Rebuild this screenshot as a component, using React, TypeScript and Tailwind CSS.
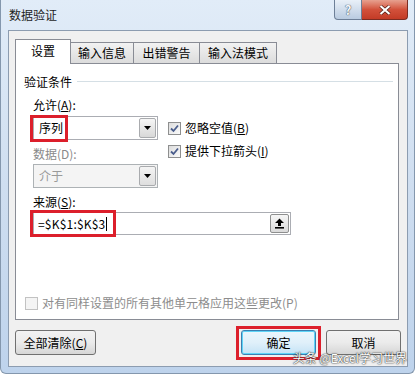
import React from "react";

const CheckBox = ({ checked, disabled }: { checked?: boolean; disabled?: boolean }) => (
  <span
    className={`w-[13px] h-[13px] border flex items-center justify-center shrink-0 ${
      disabled ? "border-[#c2c2c2] bg-[#f4f4f4]" : "border-[#8e8f8f] bg-gradient-to-br from-[#dcdcdc] to-[#fbfbfb]"
    }`}
  >
    {checked && (
      <svg width="9" height="9" viewBox="0 0 9 9">
        <path d="M1 4.5 L3.5 7 L8 1.5" fill="none" stroke="#4a5d8c" strokeWidth="1.8" />
      </svg>
    )}
  </span>
);

const DropArrow = ({ disabled }: { disabled?: boolean }) => (
  <span
    className={`w-[17px] h-full border border-[#a9abae] rounded-[2px] flex items-center justify-center bg-gradient-to-b ${
      disabled ? "from-[#f4f4f4] to-[#dedede]" : "from-[#f6f6f6] to-[#d8d8d8]"
    }`}
  >
    <svg width="7" height="4" viewBox="0 0 7 4">
      <path d="M0 0 H7 L3.5 4 Z" fill="#000" />
    </svg>
  </span>
);

const Tab = ({ label, active, w }: { label: string; active?: boolean; w: string }) => (
  <div
    className={`${w} flex items-center justify-center border border-[#898c95] ${
      active
        ? "h-[25px] bg-white border-b-0 -mb-px relative z-10 pb-[2px]"
        : "h-[21px] -ml-px bg-gradient-to-b from-[#f2f2f2] to-[#dcdcdc] border-b-0"
    }`}
  >
    {label}
  </div>
);

export default function App() {
  return (
    <div className="w-[415px] h-[374px] flex flex-col relative overflow-hidden bg-gradient-to-b from-[#e1ecf8] via-[#cfdef0] to-[#bed3ec] border-x border-b border-[#8497ad] rounded-b-[6px] pl-[7px] pr-[6px] pb-[6px] text-[12px] leading-4 text-black font-['Microsoft_YaHei','Noto_Sans_CJK_SC',sans-serif]">
      {/* Title bar */}
      <div className="h-[30px] flex justify-between shrink-0">
        <div className="pt-[7px] pl-px text-[12px] text-[#1e1e1e]">数据验证</div>
        <div className="flex h-[20px]">
          <div className="w-[28px] h-full border border-[#6d7f97] border-t-0 rounded-bl-[4px] bg-gradient-to-b from-[#e9f0f8] to-[#b9cbe0] flex items-center justify-center text-[13px] font-bold text-[#f4f6f9] [text-shadow:0_0_1px_#3b4a5c,0_0_1px_#3b4a5c]">
            ?
          </div>
          <div className="w-[46px] h-full border border-[#7b2c22] border-t-0 border-l-0 rounded-br-[4px] bg-gradient-to-b from-[#e6a08f] via-[#d2513b] to-[#c33b26] flex items-center justify-center">
            <svg width="12" height="10" viewBox="0 0 12 10">
              <path d="M1.5 1 L10.5 9 M10.5 1 L1.5 9" stroke="#4a1a12" strokeWidth="3.4" />
              <path d="M1.5 1 L10.5 9 M10.5 1 L1.5 9" stroke="#fff" strokeWidth="2.2" />
            </svg>
          </div>
        </div>
      </div>

      {/* Client area */}
      <div className="flex-1 bg-[#f0f0f0] border border-[#8c9cb0] pl-[6px] pt-[8px] flex flex-col">
        <div className="flex items-end h-[24px]">
          <Tab label="设置" active w="w-[56px]" />
          <Tab label="输入信息" w="w-[64px]" />
          <Tab label="出错警告" w="w-[67px]" />
          <Tab label="输入法模式" w="w-[78px]" />
        </div>

        {/* Panel */}
        <div className="w-[384px] h-[257px] bg-white border border-[#898c95] flex flex-col">
          <div className="flex items-center gap-[5px] pl-[8px] pr-[5px] mt-[10px]">
            <span>验证条件</span>
            <span className="flex-1 h-px bg-[#d5dfe5] mt-[-1px]" />
          </div>

          <div className="pl-[17px] mt-[7px]">
            允许(<span className="underline">A</span>):
          </div>

          <div className="flex pl-[17px] mt-[3px] gap-[10px]">
            <div className="flex flex-col w-[125px]">
              <div className="relative h-[24px] border border-[#abadb3] bg-white flex items-center justify-between pl-[5px] pr-px py-px">
                <span className="leading-4">序列</span>
                <DropArrow />
                <span className="absolute -left-[4px] -top-[2px] w-[38px] h-[27px] border-[3px] border-[#dc1f2b]" />
              </div>
              <div className="mt-[6px] text-[#8a8a8a]">数据(D):</div>
              <div className="mt-[2px] h-[24px] border border-[#adb2b5] bg-[#f4f4f4] flex items-center justify-between pl-[5px] pr-px py-px text-[#9a9a9a]">
                <span>介于</span>
                <DropArrow disabled />
              </div>
            </div>
            <div className="flex flex-col pt-[4px] gap-[7px]">
              <div className="flex items-center gap-[4px]">
                <CheckBox checked />
                <span>
                  忽略空值(<span className="underline">B</span>)
                </span>
              </div>
              <div className="flex items-center gap-[4px]">
                <CheckBox checked />
                <span>
                  提供下拉箭头(<span className="underline">I</span>)
                </span>
              </div>
            </div>
          </div>

          <div className="pl-[17px] mt-[6px]">
            来源(<span className="underline">S</span>):
          </div>
          <div className="ml-[17px] mt-[2px] w-[258px] h-[23px] relative border border-[#abadb3] bg-white flex items-center justify-between pl-[4px] pr-px">
            <span className="flex items-center tracking-[0.2px]">
              =$K$1:$K$3<span className="w-px h-[14px] bg-black ml-px" />
            </span>
            <span className="w-[19px] h-[19px] border border-[#8e8f8f] rounded-[2px] bg-gradient-to-b from-[#f6f6f6] to-[#dadada] flex items-center justify-center">
              <svg width="11" height="11" viewBox="0 0 11 11">
                <path d="M5.5 0.5 L10 5 H7 V8 H4 V5 H1 Z" fill="#000" />
                <rect x="1" y="9" width="9" height="1.6" fill="#000" />
              </svg>
            </span>
            <span className="absolute -left-[4px] -top-[3px] w-[86px] h-[27px] border-[3px] border-[#dc1f2b]" />
          </div>

          <div className="mt-auto mb-[8px] pl-[9px] flex items-center gap-[4px] text-[#8d8d8d]">
            <CheckBox disabled />
            <span>对有同样设置的所有其他单元格应用这些更改(P)</span>
          </div>
        </div>

        {/* Buttons */}
        <div className="w-[386px] mt-[10px] flex justify-between">
          <button className="w-[81px] h-[25px] border border-[#707070] rounded-[3px] bg-gradient-to-b from-[#f2f2f2] via-[#ebebeb] to-[#d6d6d6] text-[12px]">
            全部清除(<span className="underline">C</span>)
          </button>
          <div className="flex gap-[10px]">
            <div className="relative">
              <button className="w-[75px] h-[25px] border border-[#3c7fb1] rounded-[3px] bg-gradient-to-b from-[#eaf6fd] via-[#e0f0fa] to-[#c4e3f6] shadow-[inset_0_0_0_1px_#5ed4f7] text-[12px]">
                确定
              </button>
              <span className="absolute -left-[5px] -top-[4px] w-[85px] h-[34px] border-[3px] border-[#dc1f2b]" />
            </div>
            <button className="w-[75px] h-[25px] border border-[#707070] rounded-[3px] bg-gradient-to-b from-[#f2f2f2] via-[#ebebeb] to-[#d6d6d6] text-[12px]">
              取消
            </button>
          </div>
        </div>
      </div>

      {/* Watermark */}
      <div className="absolute right-[7px] bottom-[7px] text-[12px] leading-4 text-white [text-shadow:0_0_2px_#333,0_0_1px_#000]">
        头条 @Excel学习世界
      </div>
    </div>
  );
}
